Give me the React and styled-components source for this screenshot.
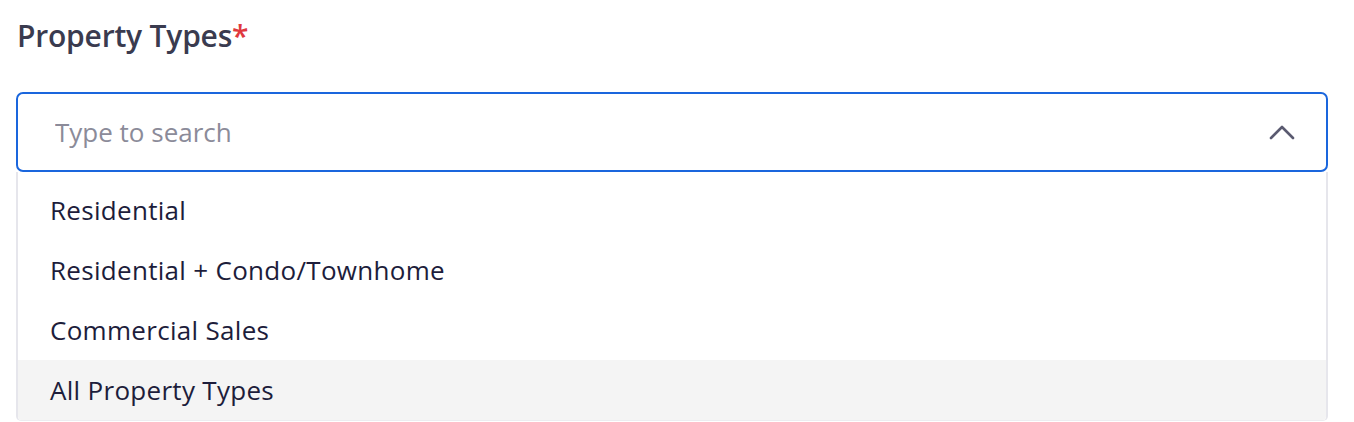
import React from 'react';
import styled, { createGlobalStyle } from 'styled-components';

const GlobalStyle = createGlobalStyle`
  html, body {
    margin: 0;
    padding: 0;
    background: #ffffff;
  }
  body {
    font-family: 'Open Sans', 'Lato', sans-serif;
  }
`;

const Field = styled.div`
  display: flex;
  flex-direction: column;
  padding: 16px 26px 0 16px;
`;

const Label = styled.label`
  display: block;
  margin: 0 0 36px 1px;
  font-size: 30px;
  line-height: 40px;
  font-weight: 600;
  letter-spacing: -0.2px;
  color: #3a3b4f;
`;

const Required = styled.span`
  color: #e0393e;
  font-weight: 600;
`;

const Control = styled.div`
  display: flex;
  align-items: center;
  justify-content: space-between;
  height: 76px;
  padding: 0 30px 0 37px;
  border: 2px solid #1a66dd;
  border-radius: 7px;
  background: #ffffff;
`;

const SearchInput = styled.input`
  flex: 1;
  border: none;
  outline: none;
  padding: 0;
  font-family: inherit;
  font-size: 26px;
  color: #2a2a40;
  background: transparent;

  &::placeholder {
    color: #8b8b99;
  }
`;

const Chevron = styled.svg`
  width: 28px;
  height: 18px;
  flex-shrink: 0;
`;

const Menu = styled.ul`
  list-style: none;
  margin: 0;
  padding: 8px 0 0;
  border-left: 2px solid #e6e6ec;
  border-right: 2px solid #e6e6ec;
  border-bottom: 1px solid #ececf0;
  border-radius: 0 0 5px 5px;
  overflow: hidden;
`;

const Option = styled.li`
  display: flex;
  align-items: center;
  height: 60px;
  padding: 0 32px;
  font-size: 26px;
  letter-spacing: 0.3px;
  color: #1d1d3b;
  background: ${(p) => (p.active ? '#f4f4f4' : '#ffffff')};
  cursor: pointer;
`;

const options = [
  'Residential',
  'Residential + Condo/Townhome',
  'Commercial Sales',
  'All Property Types',
];

export default function App() {
  return (
    <>
      <GlobalStyle />
      <Field>
        <Label>
          Property Types<Required>*</Required>
        </Label>
        <Control>
          <SearchInput placeholder="Type to search" />
          <Chevron viewBox="0 0 28 18" fill="none">
            <path
              d="M3 15 L14 4 L25 15"
              stroke="#5a5a70"
              strokeWidth="2.6"
              strokeLinecap="round"
              strokeLinejoin="round"
            />
          </Chevron>
        </Control>
        <Menu>
          {options.map((o, i) => (
            <Option key={o} active={i === options.length - 1}>
              {o}
            </Option>
          ))}
        </Menu>
      </Field>
    </>
  );
}
